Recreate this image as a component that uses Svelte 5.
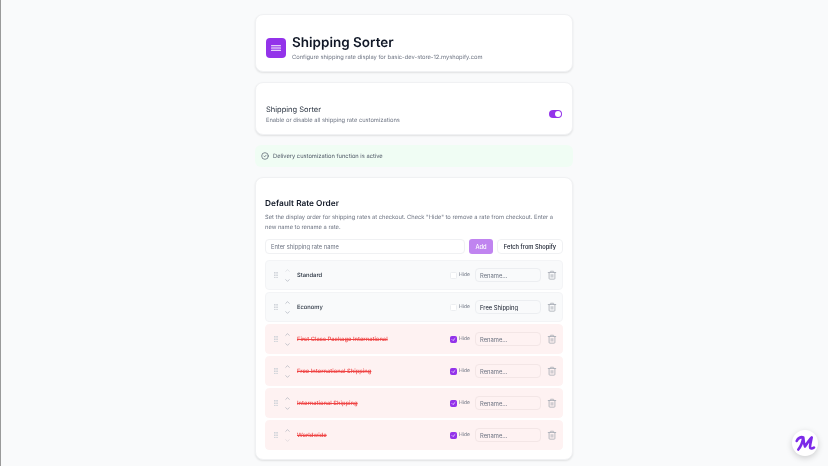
<script lang="ts">
  interface Rate {
    name: string;
    hidden: boolean;
    rename: string;
  }

  const rates: Rate[] = [
    { name: 'Standard', hidden: false, rename: '' },
    { name: 'Economy', hidden: false, rename: 'Free Shipping' },
    { name: 'First Class Package International', hidden: true, rename: '' },
    { name: 'Free International Shipping', hidden: true, rename: '' },
    { name: 'International Shipping', hidden: true, rename: '' },
    { name: 'Worldwide', hidden: true, rename: '' },
  ];
</script>

<div class="page">
  <section class="card header-card">
    <div class="app-icon">
      <svg viewBox="0 0 20 20" width="20" height="20" fill="none" stroke="white" stroke-width="1.1" stroke-linecap="round">
        <path d="M5.5 7.8h9M5.5 10h9M5.5 12.2h9" />
      </svg>
    </div>
    <div>
      <h1>Shipping Sorter</h1>
      <p class="muted">Configure shipping rate display for basic-dev-store-12.myshopify.com</p>
    </div>
  </section>

  <section class="card toggle-card">
    <div>
      <h2>Shipping Sorter</h2>
      <p class="muted">Enable or disable all shipping rate customizations</p>
    </div>
    <span class="switch"><span class="knob"></span></span>
  </section>

  <div class="alert">
    <svg viewBox="0 0 24 24" width="8" height="8" fill="none" stroke="#4b5563" stroke-width="2" stroke-linecap="round" stroke-linejoin="round">
      <circle cx="12" cy="12" r="10" />
      <path d="M8.5 12l2.5 2.5 4.5-5" />
    </svg>
    <span>Delivery customization function is active</span>
  </div>

  <section class="card rates-card">
    <h3>Default Rate Order</h3>
    <p class="muted desc">Set the display order for shipping rates at checkout. Check "Hide" to remove a rate from checkout. Enter a new name to rename a rate.</p>

    <div class="add-row">
      <input class="add-input" placeholder="Enter shipping rate name" />
      <button class="add-btn">Add</button>
      <button class="fetch-btn">Fetch from Shopify</button>
    </div>

    <div class="rate-list">
      {#each rates as rate, i}
        <div class="rate" class:hidden={rate.hidden}>
          <svg class="grip" viewBox="0 0 6 10" width="4" height="6.6" fill="#cfd3d9">
            <rect x="0" y="0" width="2.4" height="2.4" /><rect x="3.4" y="0" width="2.4" height="2.4" />
            <rect x="0" y="3.8" width="2.4" height="2.4" /><rect x="3.4" y="3.8" width="2.4" height="2.4" />
            <rect x="0" y="7.6" width="2.4" height="2.4" /><rect x="3.4" y="7.6" width="2.4" height="2.4" />
          </svg>
          <div class="arrows">
            <svg class:off={i === 0} viewBox="0 0 24 24" width="7" height="7" fill="none" stroke="#9ca3af" stroke-width="2" stroke-linecap="round" stroke-linejoin="round"><path d="M6 15l6-6 6 6" /></svg>
            <svg class:off={i === rates.length - 1} viewBox="0 0 24 24" width="7" height="7" fill="none" stroke="#9ca3af" stroke-width="2" stroke-linecap="round" stroke-linejoin="round"><path d="M6 9l6 6 6-6" /></svg>
          </div>
          <span class="rate-name">{rate.name}</span>
          <span class="check" class:checked={rate.hidden}>
            {#if rate.hidden}
              <svg viewBox="0 0 24 24" width="7" height="7" fill="none" stroke="white" stroke-width="3.5" stroke-linecap="round" stroke-linejoin="round"><path d="M5 12.5l4.5 4.5L19 7.5" /></svg>
            {/if}
          </span>
          <span class="hide-label">Hide</span>
          <input class="rename" placeholder="Rename..." value={rate.rename} />
          <svg class="trash" viewBox="0 0 24 24" width="10" height="10" fill="none" stroke="#a8adb6" stroke-width="2" stroke-linecap="round" stroke-linejoin="round">
            <path d="M3 6h18M8 6V4a1 1 0 0 1 1-1h6a1 1 0 0 1 1 1v2M19 6v14a2 2 0 0 1-2 2H7a2 2 0 0 1-2-2V6M10 11v6M14 11v6" />
          </svg>
        </div>
      {/each}
    </div>
  </section>
</div>

<button class="badge" aria-label="Support">
  <svg viewBox="0 0 26 26" width="26" height="26" fill="none" stroke="#7c2ae8" stroke-width="2.6" stroke-linecap="round" stroke-linejoin="round">
    <path d="M4.7 11C6 8 9 6.5 11.3 7.5C10.5 12 8.5 17 6.3 19.5M11.3 7.5C11.5 10.5 12 14 13 16.5C15 13.5 17 10 19.7 7.5C19 11 18 14.5 18 17C18 19 20 19 22 17.5" />
  </svg>
</button>

<style>
  :global(body) {
    background: #f9fafb;
    box-shadow: inset 1px 0 0 #9a9a9a;
    font-family: Inter, "Liberation Sans", sans-serif;
    color: #111827;
    overflow: hidden;
    text-rendering: geometricPrecision;
  }

  .page {
    width: 318px;
    margin: 0 auto;
    padding-top: 14px;
    display: flex;
    flex-direction: column;
    gap: 10px;
    height: 452px;
    will-change: transform;
  }

  .card {
    background: white;
    border: 1px solid #f0f1f3;
    border-radius: 8px;
    box-shadow: 0 1px 2px rgba(0, 0, 0, 0.1);
    box-sizing: border-box;
  }

  .muted {
    margin: 0;
    color: #6b7280;
    font-size: 5.76px;
  }

  .header-card {
    height: 58px;
    padding: 18px 10px 8px;
    display: flex;
    align-items: center;
    gap: 6px;
  }

  .app-icon {
    width: 20px;
    height: 20px;
    border-radius: 4px;
    background: #9333ea;
    display: flex;
    flex-shrink: 0;
  }

  h1 {
    margin: 0 0 3px;
    font-size: 13.5px;
    line-height: 16px;
    font-weight: 600;
  }

  .toggle-card {
    height: 53px;
    padding: 19px 10px 9px;
    display: flex;
    align-items: center;
    justify-content: space-between;
  }

  h2 {
    margin: 0 0 2px;
    font-size: 7.5px;
    line-height: 11px;
    font-weight: 400;
    color: #1f2937;
  }

  .switch {
    width: 13px;
    height: 8px;
    box-sizing: border-box;
    border-radius: 4px;
    background: #9333ea;
    display: flex;
    align-items: center;
    justify-content: flex-end;
    padding: 0 1px;
  }

  .knob {
    width: 6px;
    height: 6px;
    border-radius: 50%;
    background: white;
  }

  .alert {
    height: 22px;
    background: #f0fdf4;
    border-radius: 6px;
    padding: 0 6px;
    display: flex;
    align-items: center;
    gap: 4px;
    font-size: 5.76px;
    color: #4b5563;
  }

  .rates-card {
    height: 283px;
    padding: 20px 9px 0;
  }

  h3 {
    margin: 0 0 3px;
    font-size: 8.3px;
    line-height: 12px;
    font-weight: 600;
  }

  .desc {
    line-height: 10px;
  }

  .add-row {
    display: flex;
    gap: 4px;
    margin-top: 6px;
    margin-bottom: 6px;
  }

  .add-input {
    flex: 1;
    min-width: 0;
    height: 15px;
    box-sizing: border-box;
    border: 1px solid #f0f1f3;
    border-radius: 4px;
    padding: 0 5px;
    font: inherit;
    font-size: 5.76px;
    outline: none;
  }

  .add-input::placeholder,
  .rename::placeholder {
    color: #6b7280;
  }

  button {
    font-family: inherit;
    cursor: pointer;
  }

  .add-btn {
    width: 24px;
    height: 15px;
    padding: 0;
    border: none;
    border-radius: 3px;
    background: #c084f0;
    color: white;
    font-size: 5.76px;
    font-weight: 500;
  }

  .fetch-btn {
    width: 66px;
    height: 15px;
    padding: 0;
    background: white;
    border: 1px solid #f0f1f3;
    border-radius: 4px;
    color: #111827;
    font-size: 5.76px;
    font-weight: 500;
  }

  .rate-list {
    display: flex;
    flex-direction: column;
    gap: 2px;
  }

  .rate {
    height: 30px;
    box-sizing: border-box;
    background: #f9fafb;
    border: 1px solid #f3f4f6;
    border-radius: 4px;
    padding: 0 5px 0 8px;
    display: flex;
    align-items: center;
  }

  .rate.hidden {
    background: #fef2f2;
    border-color: #fef2f2;
  }

  .grip {
    flex-shrink: 0;
  }

  .arrows {
    display: flex;
    flex-direction: column;
    gap: 3px;
    margin-left: 6px;
  }

  .off {
    opacity: 0.45;
  }

  .rate-name {
    margin-left: 6px;
    flex: 1;
    font-size: 5.8px;
    font-weight: 500;
    color: #1f2937;
  }

  .rate.hidden .rate-name {
    color: #ef4444;
    text-decoration: line-through;
  }

  .check {
    width: 7px;
    height: 7px;
    box-sizing: border-box;
    border: 1px solid #eceef1;
    border-radius: 1.5px;
    background: white;
    display: flex;
    align-items: center;
    justify-content: center;
  }

  .check.checked {
    background: #9333ea;
    border-color: #9333ea;
  }

  .hide-label {
    margin-left: 2px;
    width: 11px;
    font-size: 5px;
    color: #6b7280;
  }

  .rename {
    margin-left: 5px;
    width: 66px;
    height: 14px;
    box-sizing: border-box;
    border: 1px solid #eceef1;
    border-radius: 4px;
    padding: 0 4px;
    background: #f9fafb;
    font: inherit;
    font-size: 5.85px;
    color: #111827;
    outline: none;
  }

  .rate.hidden .rename {
    background: #fef2f2;
    border-color: #f3e6e6;
  }

  .trash {
    margin-left: 6px;
    flex-shrink: 0;
  }

  .badge {
    position: fixed;
    left: 792px;
    top: 430px;
    width: 26px;
    height: 26px;
    padding: 0;
    border: none;
    border-radius: 50%;
    background: white;
    box-shadow: 0 2px 6px rgba(0, 0, 0, 0.18);
  }
</style>
